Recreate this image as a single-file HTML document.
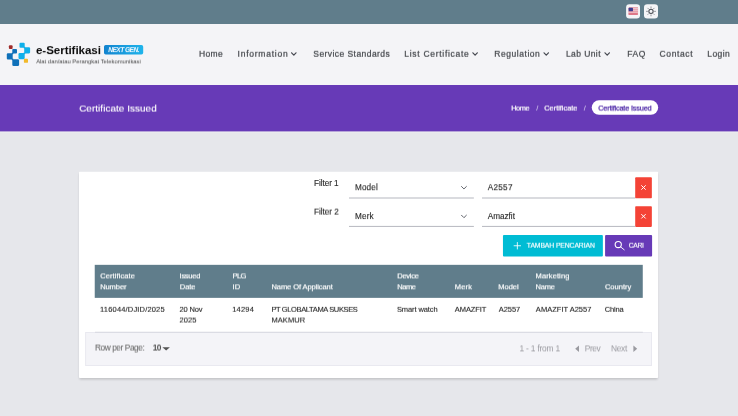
<!DOCTYPE html>
<html lang="en">
<head>
<meta charset="utf-8">
<title>e-Sertifikasi - Certificate Issued</title>
<style>
*{box-sizing:border-box;margin:0;padding:0}
html,body{width:738px;height:416px;overflow:hidden}
body{position:relative;background:#e6e7eb;font-family:"Liberation Sans",sans-serif;}
#bg{position:absolute;left:0;top:0;width:738px;height:416px;display:block}
#texts{position:absolute;left:0;top:0;width:738px;height:416px}
.t{position:absolute;white-space:nowrap;line-height:1.15;font-family:"Liberation Sans",sans-serif;will-change:transform;transform-origin:0 50%}
</style>
</head>
<body>
<svg id="bg" width="738" height="416" viewBox="0 0 738 416">
  <defs>
    <linearGradient id="gBadge" x1="0" y1="0" x2="1" y2="0">
      <stop offset="0" stop-color="#1283cf"/><stop offset="1" stop-color="#1fb4eb"/>
    </linearGradient>
    <filter id="fShadow" x="-2%" y="-5%" width="104%" height="112%">
      <feGaussianBlur stdDeviation="1.25"/>
    </filter>
  </defs>
  <!-- page background -->
  <rect x="0" y="0" width="738" height="416" fill="#e6e7eb"/>
  <!-- top bar -->
  <rect id="topbar" x="0" y="0" width="738" height="24" fill="#607d8b"/>
  <rect x="626.1" y="4.3" width="13.9" height="14.3" rx="3.3" fill="#f5f5f8"/>
  <rect x="644" y="4.3" width="14" height="14.3" rx="3.3" fill="#f5f5f8"/>
  <!-- flag -->
  <g id="flag">
    <rect x="628.35" y="7" width="9.7" height="7.9" rx="1.2" fill="#efc6cd"/>
    <rect x="629" y="7.1" width="9" height="1" fill="#e9a5af"/>
    <rect x="628.35" y="9.2" width="9.7" height="1" fill="#e7a0ab"/>
    <rect x="628.35" y="11.3" width="9.7" height="1" fill="#e594a1"/>
    <rect x="628.35" y="12.9" width="9.7" height="2" rx="0.9" fill="#de7889"/>
    <rect x="628.6" y="7.7" width="4.35" height="3.5" rx="0.5" fill="#3e3c8f"/>
  </g>
  <!-- sun -->
  <g id="sun" fill="none" stroke="#4b4e55" stroke-linecap="round">
    <circle cx="651.0" cy="11.35" r="2.15" stroke-width="1.05"/>
    <path stroke-width="0.8" stroke-opacity="0.7" d="M654.50 11.35L655.50 11.35M653.47 13.82L654.18 14.53M651.00 14.85L651.00 15.85M648.53 13.82L647.82 14.53M647.50 11.35L646.50 11.35M648.53 8.88L647.82 8.17M651.00 7.85L651.00 6.85M653.47 8.88L654.18 8.17"/>
  </g>
  <!-- nav -->
  <rect id="nav" x="0" y="24" width="738" height="61" fill="#f4f4f7"/>
  <!-- logo mark -->
  <g id="logo">
    <rect x="8.9" y="45.3" width="3.7" height="3.6" rx="0.9" fill="#9f2a2a"/>
    <g fill="#0fb0ea">
      <rect x="19.5" y="42.8" width="5.2" height="4.9" rx="1"/>
      <rect x="24.2" y="47.3" width="5.9" height="6.1" rx="1.1"/>
      <rect x="18.5" y="53.05" width="6.2" height="6.1" rx="1.1"/>
      <rect x="23.7" y="46.8" width="1.5" height="1.5"/>
      <rect x="23.7" y="52.5" width="1.5" height="1.5"/>
    </g>
    <g fill="#0f70b9">
      <rect x="12.3" y="48.9" width="4.7" height="4.6" rx="0.9"/>
      <rect x="6.8" y="53.3" width="5.9" height="6.2" rx="1.1"/>
      <rect x="12.3" y="59.3" width="6.8" height="6.8" rx="1.3"/>
      <rect x="11.8" y="52.7" width="1.5" height="1.5"/>
      <rect x="11.8" y="58.6" width="1.5" height="1.5"/>
    </g>
    <rect x="23.9" y="58.8" width="4.1" height="4" rx="0.9" fill="#f2b92b"/>
  </g>
  <rect id="badge" x="104" y="44.95" width="39.2" height="9.6" rx="1.7" fill="url(#gBadge)"/>
  <!-- nav chevrons -->
  <g id="chevs" fill="none" stroke="#474a52" stroke-width="1.2" stroke-linecap="round" stroke-linejoin="round">
    <path d="M291.60 52.8l2.2 2.4 2.2-2.4"/>
    <path d="M472.90 52.8l2.2 2.4 2.2-2.4"/>
    <path d="M544.05 52.8l2.2 2.4 2.2-2.4"/>
    <path d="M605.00 52.8l2.2 2.4 2.2-2.4"/>
  </g>
  <!-- banner -->
  <rect x="0" y="130" width="738" height="2.6" fill="#ededf0"/>
  <rect id="banner" x="0" y="85" width="738" height="46.4" fill="#673ab7"/>
  <rect id="pill" x="591.75" y="100.3" width="66.4" height="14.5" rx="7.25" fill="#ffffff"/>
  <!-- card -->
  <rect x="79.4" y="173.6" width="578.3" height="206" rx="1" fill="#000" opacity="0.16" filter="url(#fShadow)"/>
  <rect id="card" x="79" y="171.65" width="579.1" height="206.35" rx="0.8" fill="#ffffff"/>
  <!-- filter rows -->
  <g fill="#bdbec5">
    <rect x="349" y="197.45" width="124.85" height="1.1"/>
    <rect x="482" y="197.45" width="153.4" height="1.1"/>
    <rect x="349" y="225.9" width="124.85" height="1.1"/>
    <rect x="482" y="225.9" width="153.4" height="1.1"/>
  </g>
  <g fill="none" stroke="#5a5d65" stroke-width="0.95" stroke-linecap="round" stroke-linejoin="round">
    <path d="M461.5 186.5l2.45 2.45 2.45-2.45"/>
    <path d="M461.5 215.25l2.45 2.45 2.45-2.45"/>
  </g>
  <rect x="635.2" y="177.35" width="16.65" height="20.85" rx="0.8" fill="#f44336"/>
  <rect x="635.2" y="206.15" width="16.65" height="20.75" rx="0.8" fill="#f44336"/>
  <g fill="none" stroke="#fff" stroke-width="1" stroke-linecap="round">
    <path d="M641.6 185.6l3.8 3.8M645.4 185.6l-3.8 3.8"/>
    <path d="M641.6 214.4l3.8 3.8M645.4 214.4l-3.8 3.8"/>
  </g>
  <!-- buttons -->
  <rect id="btn-add" x="502.95" y="235" width="99.92" height="21.5" rx="1" fill="#00bcd4"/>
  <rect id="btn-cari" x="605.08" y="235" width="47.02" height="21.5" rx="1" fill="#673ab7"/>
  <path d="M517.35 242.1v7.3M513.7 245.75h7.3" fill="none" stroke="#fff" stroke-width="0.85"/>
  <g fill="none" stroke="#fff" stroke-width="0.95" stroke-linecap="round">
    <circle cx="618.25" cy="244.55" r="3.1" stroke-width="1.1"/>
    <path d="M620.6 246.9l3.6 2.9"/>
  </g>
  <!-- table -->
  <rect id="thead" x="94.74" y="264.84" width="548.02" height="33.02" fill="#607d8b"/>
  <rect id="tfoot" x="85.6" y="332.5" width="565.9" height="33" fill="#f4f4f8" stroke="#e9e9f0" stroke-width="1"/>
  <rect id="rowline" x="95" y="331.75" width="547.8" height="1" fill="#d6d7df"/>
  <path d="M162.4 347.2h7.5l-3.75 3.3z" fill="#555"/>
  <path d="M579 345.5v6.6l-3.8-3.3z" fill="#9a9aa0"/>
  <path d="M633.4 345.5v6.6l3.8-3.3z" fill="#9a9aa0"/>
</svg>
<div id="texts">
<nav class="main-nav">
<span class="t" style="font-size:8.5px;color:#3f4247;letter-spacing:0.411px;-webkit-text-stroke:0.2px #3f4247;left:198px;top:49px;padding-left:0.89px;transform:translate(0px,0.79px) rotate(0.02deg);">Home</span>
<span class="t" style="font-size:8.5px;color:#3f4247;letter-spacing:0.757px;-webkit-text-stroke:0.2px #3f4247;left:237px;top:49px;padding-left:0.57px;transform:translate(0px,0.79px) rotate(0.02deg);">Information</span>
<span class="t" style="font-size:8.5px;color:#3f4247;letter-spacing:0.438px;-webkit-text-stroke:0.2px #3f4247;left:313px;top:49px;padding-left:0.29px;transform:translate(0px,0.79px) rotate(0.02deg);">Service Standards</span>
<span class="t" style="font-size:8.5px;color:#3f4247;letter-spacing:0.708px;-webkit-text-stroke:0.2px #3f4247;left:404px;top:49px;padding-left:0.29px;transform:translate(0px,0.79px) rotate(0.02deg);">List Certificate</span>
<span class="t" style="font-size:8.5px;color:#3f4247;letter-spacing:0.543px;-webkit-text-stroke:0.2px #3f4247;left:494px;top:49px;padding-left:0.29px;transform:translate(0px,0.79px) rotate(0.02deg);">Regulation</span>
<span class="t" style="font-size:8.5px;color:#3f4247;letter-spacing:0.420px;-webkit-text-stroke:0.2px #3f4247;left:565px;top:49px;padding-left:0.93px;transform:translate(0px,0.79px) rotate(0.02deg);">Lab Unit</span>
<span class="t" style="font-size:8.5px;color:#3f4247;letter-spacing:0.531px;-webkit-text-stroke:0.2px #3f4247;left:627px;top:49px;padding-left:0.29px;transform:translate(0px,0.79px) rotate(0.02deg);">FAQ</span>
<span class="t" style="font-size:8.5px;color:#3f4247;letter-spacing:0.637px;-webkit-text-stroke:0.2px #3f4247;left:659px;top:49px;padding-left:0.50px;transform:translate(0px,0.79px) rotate(0.02deg);">Contact</span>
<span class="t" style="font-size:8.5px;color:#3f4247;letter-spacing:0.425px;-webkit-text-stroke:0.2px #3f4247;left:707px;top:49px;padding-left:0.29px;transform:translate(0px,0.79px) rotate(0.02deg);">Login</span>
</nav>
<div class="brand">
<span class="t" style="font-size:11.6px;color:#0a0a0a;font-weight:700;letter-spacing:-0.057px;left:35px;top:43px;padding-left:0.94px;transform:translate(0px,0.10px) rotate(0.02deg);">e-Sertifikasi</span>
<span class="t" style="font-size:6.6px;color:#f2f9ff;font-weight:700;letter-spacing:-0.521px;font-style:italic;left:108px;top:46px;padding-left:0.21px;transform:translate(0px,0.12px) rotate(0.02deg);">NEXT GEN.</span>
<span class="t" style="font-size:5.9px;color:#4a4a4a;letter-spacing:-0.008px;left:36px;top:58px;padding-left:0.14px;transform:translate(0px,0.39px) rotate(0.02deg);">Alat dan/atau Perangkat Telekomunikasi</span>
</div>
<header class="page-title">
<span class="t" style="font-size:9.9px;color:#ffffff;letter-spacing:0.071px;-webkit-text-stroke:0.12px #ffffff;left:79px;top:102px;padding-left:0.15px;transform:translate(0px,0.55px) rotate(0.02deg);">Certificate Issued</span>
<span class="t" style="font-size:7.4px;color:#ffffff;letter-spacing:-0.437px;-webkit-text-stroke:0.2px #ffffff;left:511px;top:104px;padding-left:0.19px;transform:translate(0px,0.55px) rotate(0.02deg);">Home</span>
<span class="t" style="font-size:7.4px;color:#e0d6f2;left:536px;top:104px;padding-left:0.23px;transform:translate(0px,0.55px) rotate(0.02deg);">/</span>
<span class="t" style="font-size:7.4px;color:#ffffff;letter-spacing:-0.017px;-webkit-text-stroke:0.2px #ffffff;left:544px;top:104px;padding-left:0.29px;transform:translate(0px,0.55px) rotate(0.02deg);">Certificate</span>
<span class="t" style="font-size:7.4px;color:#e0d6f2;left:583px;top:104px;padding-left:0.68px;transform:translate(0px,0.55px) rotate(0.02deg);">/</span>
<span class="t" style="font-size:7.4px;color:#4f2aa8;letter-spacing:-0.209px;-webkit-text-stroke:0.25px #4f2aa8;left:598px;top:104px;padding-left:0.14px;transform:translate(0px,0.55px) rotate(0.02deg);">Certificate Issued</span>
</header>
<div class="filters">
<span class="t" style="font-size:8.2px;color:#262626;letter-spacing:-0.039px;-webkit-text-stroke:0.12px #262626;left:313px;top:179px;padding-left:0.93px;transform:translate(0px,0.00px) rotate(0.02deg);">Filter 1</span>
<span class="t" style="font-size:8.2px;color:#262626;letter-spacing:-0.018px;-webkit-text-stroke:0.12px #262626;left:313px;top:207px;padding-left:0.94px;transform:translate(0px,0.61px) rotate(0.02deg);">Filter 2</span>
<span class="t" style="font-size:8.2px;color:#262626;letter-spacing:0.140px;-webkit-text-stroke:0.12px #262626;left:354px;top:183px;padding-left:0.94px;transform:translate(0px,0.22px) rotate(0.02deg);">Model</span>
<span class="t" style="font-size:8.2px;color:#262626;letter-spacing:0.194px;-webkit-text-stroke:0.12px #262626;left:354px;top:212px;padding-left:0.94px;transform:translate(0px,0.07px) rotate(0.02deg);">Merk</span>
<span class="t" style="font-size:8.2px;color:#262626;letter-spacing:0.298px;-webkit-text-stroke:0.12px #262626;left:487px;top:183px;padding-left:0.65px;transform:translate(0px,0.22px) rotate(0.02deg);">A2557</span>
<span class="t" style="font-size:8.2px;color:#262626;letter-spacing:-0.015px;-webkit-text-stroke:0.12px #262626;left:487px;top:212px;padding-left:0.73px;transform:translate(0px,0.07px) rotate(0.02deg);">Amazfit</span>
</div>
<div class="actions">
<span class="t" style="font-size:6.8px;color:#ffffff;letter-spacing:-0.093px;-webkit-text-stroke:0.15px #ffffff;left:526px;top:241px;padding-left:0.85px;transform:translate(0px,0.74px) rotate(0.02deg);">TAMBAH PENCARIAN</span>
<span class="t" style="font-size:6.8px;color:#ffffff;letter-spacing:-0.354px;-webkit-text-stroke:0.15px #ffffff;left:628px;top:241px;padding-left:0.71px;transform:translate(0px,0.74px) rotate(0.02deg);">CARI</span>
</div>
<div class="table-head">
<span class="t" style="font-size:7.5px;color:#ffffff;letter-spacing:0.096px;-webkit-text-stroke:0.18px #ffffff;left:100px;top:272px;padding-left:0.20px;transform:translate(0px,0.42px) rotate(0.02deg);">Certificate</span>
<span class="t" style="font-size:7.5px;color:#ffffff;letter-spacing:-0.051px;-webkit-text-stroke:0.18px #ffffff;left:100px;top:283px;padding-left:0.14px;transform:translate(0px,0.34px) rotate(0.02deg);">Number</span>
<span class="t" style="font-size:7.5px;color:#ffffff;letter-spacing:-0.266px;-webkit-text-stroke:0.18px #ffffff;left:179px;top:272px;padding-left:0.57px;transform:translate(0px,0.42px) rotate(0.02deg);">Issued</span>
<span class="t" style="font-size:7.5px;color:#ffffff;letter-spacing:-0.128px;-webkit-text-stroke:0.18px #ffffff;left:179px;top:283px;padding-left:0.85px;transform:translate(0px,0.34px) rotate(0.02deg);">Date</span>
<span class="t" style="font-size:7.5px;color:#ffffff;letter-spacing:-0.616px;-webkit-text-stroke:0.18px #ffffff;left:232px;top:272px;padding-left:0.57px;transform:translate(0px,0.42px) rotate(0.02deg);">PLG</span>
<span class="t" style="font-size:7.5px;color:#ffffff;-webkit-text-stroke:0.18px #ffffff;left:232px;top:283px;padding-left:0.61px;transform:translate(0px,0.34px) rotate(0.02deg);">ID</span>
<span class="t" style="font-size:7.5px;color:#ffffff;letter-spacing:-0.080px;-webkit-text-stroke:0.18px #ffffff;left:271px;top:283px;padding-left:0.48px;transform:translate(0px,0.34px) rotate(0.02deg);">Name Of Applicant</span>
<span class="t" style="font-size:7.5px;color:#ffffff;letter-spacing:-0.238px;-webkit-text-stroke:0.18px #ffffff;left:397px;top:272px;padding-left:0.24px;transform:translate(0px,0.42px) rotate(0.02deg);">Device</span>
<span class="t" style="font-size:7.5px;color:#ffffff;letter-spacing:-0.438px;-webkit-text-stroke:0.18px #ffffff;left:397px;top:283px;padding-left:0.29px;transform:translate(0px,0.34px) rotate(0.02deg);">Name</span>
<span class="t" style="font-size:7.5px;color:#ffffff;letter-spacing:0.156px;-webkit-text-stroke:0.18px #ffffff;left:454px;top:283px;padding-left:0.86px;transform:translate(0px,0.34px) rotate(0.02deg);">Merk</span>
<span class="t" style="font-size:7.5px;color:#ffffff;letter-spacing:0.004px;-webkit-text-stroke:0.18px #ffffff;left:498px;top:283px;padding-left:0.28px;transform:translate(0px,0.34px) rotate(0.02deg);">Model</span>
<span class="t" style="font-size:7.5px;color:#ffffff;letter-spacing:0.113px;-webkit-text-stroke:0.18px #ffffff;left:535px;top:272px;padding-left:0.52px;transform:translate(0px,0.42px) rotate(0.02deg);">Marketing</span>
<span class="t" style="font-size:7.5px;color:#ffffff;letter-spacing:-0.241px;-webkit-text-stroke:0.18px #ffffff;left:535px;top:283px;padding-left:0.62px;transform:translate(0px,0.34px) rotate(0.02deg);">Name</span>
<span class="t" style="font-size:7.5px;color:#ffffff;letter-spacing:0.011px;-webkit-text-stroke:0.18px #ffffff;left:604px;top:283px;padding-left:0.95px;transform:translate(0px,0.34px) rotate(0.02deg);">Country</span>
</div>
<div class="table-row">
<span class="t" style="font-size:7.5px;color:#262626;letter-spacing:0.170px;-webkit-text-stroke:0.12px #262626;left:100px;top:305px;padding-left:0.08px;transform:translate(0px,0.84px) rotate(0.02deg);">116044/DJID/2025</span>
<span class="t" style="font-size:7.5px;color:#262626;letter-spacing:-0.182px;-webkit-text-stroke:0.12px #262626;left:179px;top:305px;padding-left:0.57px;transform:translate(0px,0.84px) rotate(0.02deg);">20 Nov</span>
<span class="t" style="font-size:7.5px;color:#262626;letter-spacing:0.094px;-webkit-text-stroke:0.12px #262626;left:179px;top:316px;padding-left:0.53px;transform:translate(0px,0.53px) rotate(0.02deg);">2025</span>
<span class="t" style="font-size:7.5px;color:#262626;letter-spacing:0.191px;-webkit-text-stroke:0.12px #262626;left:232px;top:305px;padding-left:0.19px;transform:translate(0px,0.84px) rotate(0.02deg);">14294</span>
<span class="t" style="font-size:7.5px;color:#262626;letter-spacing:-0.365px;-webkit-text-stroke:0.12px #262626;left:271px;top:305px;padding-left:0.39px;transform:translate(0px,0.84px) rotate(0.02deg);">PT GLOBALTAMA SUKSES</span>
<span class="t" style="font-size:7.5px;color:#262626;letter-spacing:0.077px;-webkit-text-stroke:0.12px #262626;left:271px;top:316px;padding-left:0.48px;transform:translate(0px,0.53px) rotate(0.02deg);">MAKMUR</span>
<span class="t" style="font-size:7.5px;color:#262626;letter-spacing:-0.093px;-webkit-text-stroke:0.12px #262626;left:396px;top:305px;padding-left:0.94px;transform:translate(0px,0.84px) rotate(0.02deg);">Smart watch</span>
<span class="t" style="font-size:7.5px;color:#262626;letter-spacing:-0.092px;-webkit-text-stroke:0.12px #262626;left:454px;top:305px;padding-left:0.83px;transform:translate(0px,0.84px) rotate(0.02deg);">AMAZFIT</span>
<span class="t" style="font-size:7.5px;color:#262626;letter-spacing:-0.074px;-webkit-text-stroke:0.12px #262626;left:498px;top:305px;padding-left:0.77px;transform:translate(0px,0.84px) rotate(0.02deg);">A2557</span>
<span class="t" style="font-size:7.5px;color:#262626;letter-spacing:0.021px;-webkit-text-stroke:0.12px #262626;left:535px;top:305px;padding-left:0.87px;transform:translate(0px,0.84px) rotate(0.02deg);">AMAZFIT A2557</span>
<span class="t" style="font-size:7.5px;color:#262626;letter-spacing:-0.170px;-webkit-text-stroke:0.12px #262626;left:604px;top:305px;padding-left:0.84px;transform:translate(0px,0.84px) rotate(0.02deg);">China</span>
</div>
<div class="table-foot">
<span class="t" style="font-size:8.3px;color:#6b6b6b;letter-spacing:-0.415px;-webkit-text-stroke:0.08px #6b6b6b;left:94px;top:343px;padding-left:0.93px;transform:translate(0px,0.55px) rotate(0.02deg);">Row per Page:</span>
<span class="t" style="font-size:8.4px;color:#555555;font-weight:700;letter-spacing:-0.765px;left:152px;top:343px;padding-left:0.79px;transform:translate(0px,0.55px) rotate(0.02deg);">10</span>
<span class="t" style="font-size:8.4px;color:#9a9aa0;letter-spacing:-0.197px;left:519px;top:344px;padding-left:0.50px;transform:translate(0px,0.41px) rotate(0.02deg);">1 - 1 from 1</span>
<span class="t" style="font-size:8.4px;color:#9a9aa0;letter-spacing:-0.423px;left:584px;top:344px;padding-left:0.74px;transform:translate(0px,0.41px) rotate(0.02deg);">Prev</span>
<span class="t" style="font-size:8.4px;color:#9a9aa0;letter-spacing:-0.283px;left:610px;top:344px;padding-left:0.94px;transform:translate(0px,0.41px) rotate(0.02deg);">Next</span>
</div>
</div>
</body>
</html>
